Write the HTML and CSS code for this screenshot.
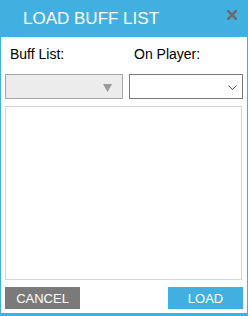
FILE: index.html
```html
<!DOCTYPE html>
<html>
<head>
<meta charset="utf-8">
<link rel="stylesheet" href="styles.css">
</head>
<body>
<div class="window">
  <div class="titlebar">
    <span class="title">LOAD BUFF LIST</span>
    <svg class="close" width="10" height="10" viewBox="0 0 10 10"><path d="M1 1 L9 9 M9 1 L1 9" stroke="#6b6b6b" stroke-width="2.6" stroke-linecap="square"/></svg>
  </div>
  <div class="content">
    <div class="fields">
      <div class="field left">
        <label class="label">Buff List:</label>
        <div class="select disabled">
          <svg class="tri" width="9" height="8" viewBox="0 0 9 8"><path d="M0 0 H9 L4.5 8 Z" fill="#9a9a9a"/></svg>
        </div>
      </div>
      <div class="field right">
        <label class="label">On Player:</label>
        <div class="select">
          <svg class="chev" width="9" height="5" viewBox="0 0 9 5"><path d="M0.5 0.5 L4.5 4.5 L8.5 0.5" fill="none" stroke="#555" stroke-width="1"/></svg>
        </div>
      </div>
    </div>
    <div class="list"></div>
    <div class="buttons">
      <button class="btn cancel">CANCEL</button>
      <button class="btn load">LOAD</button>
    </div>
  </div>
</div>
</body>
</html>
```
FILE: styles.css
```css
html, body {
  margin: 0;
  padding: 0;
  background: #ffffff;
}
.window {
  width: 248px;
  height: 316px;
  box-sizing: border-box;
  background: #41b0e0;
  padding: 0 1px 3px 1px;
  display: flex;
  flex-direction: column;
  font-family: "Liberation Sans", Arial, sans-serif;
}
.titlebar {
  height: 37px;
  display: flex;
  align-items: flex-start;
  justify-content: space-between;
  padding: 0 10px 0 22px;
  box-sizing: border-box;
}
.title {
  color: #ffffff;
  font-size: 17px;
  line-height: 17px;
  margin-top: 10px;
}
.close {
  margin-top: 10px;
}
.content {
  flex: 1;
  background: #ffffff;
  padding: 0 4px 0 4px;
  display: flex;
  flex-direction: column;
}
.fields {
  display: flex;
  gap: 6px;
}
.field {
  display: flex;
  flex-direction: column;
}
.field.left { width: 118px; }
.field.right { width: 114px; }
.label {
  font-size: 14px;
  line-height: 16px;
  color: #000;
  padding-left: 5px;
  margin-top: 9px;
  height: 28px;
}
.select {
  height: 25px;
  box-sizing: border-box;
  border: 1px solid #7d7d7d;
  background: #fff;
  display: flex;
  align-items: center;
  justify-content: flex-end;
}
.select.disabled {
  background: #ececec;
  border-color: #a6a6a6;
}
.tri { margin-right: 10px; margin-top: 2px; }
.chev { margin-right: 5px; margin-top: 2px; }
.list {
  margin-top: 7px;
  width: 237px;
  height: 174px;
  box-sizing: border-box;
  border: 1px solid #d4d4d4;
}
.buttons {
  margin-top: 7px;
  display: flex;
  justify-content: space-between;
}
.btn {
  width: 75px;
  height: 22px;
  border: none;
  padding: 0;
  color: #fff;
  font-family: "Liberation Sans", Arial, sans-serif;
  font-size: 13px;
}
.cancel { background: #7a7a7a; }
.load { background: #41b0e0; }
```
